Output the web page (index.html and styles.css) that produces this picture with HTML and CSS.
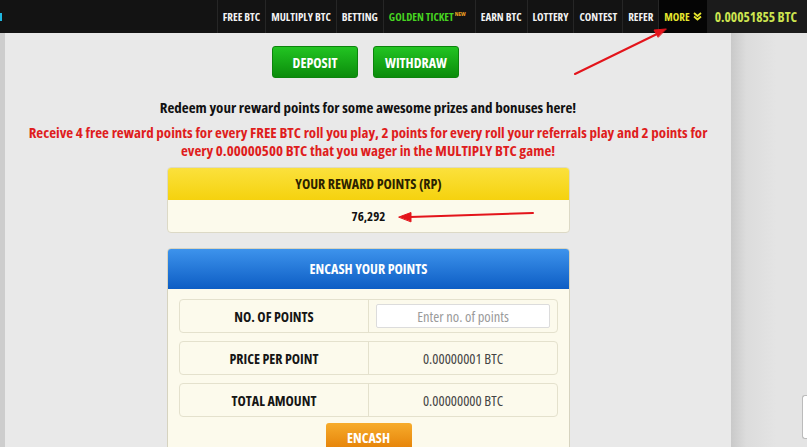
FILE: index.html
```html
<!DOCTYPE html>
<html lang="en">
<head>
  <meta charset="UTF-8">
  <meta name="viewport" content="width=device-width, initial-scale=1">
  <title>Reward Points</title>
  <link rel="stylesheet" href="styles.css">
</head>
<body>
  <header class="topbar">
    <div class="logo-bit"></div>
    <ul class="menu">
      <li>FREE BTC</li>
      <li>MULTIPLY BTC</li>
      <li>BETTING</li>
      <li class="golden">GOLDEN TICKET<sup>NEW</sup></li>
      <li>EARN BTC</li>
      <li>LOTTERY</li>
      <li>CONTEST</li>
      <li>REFER</li>
      <li class="more">MORE
        <svg width="9" height="9" viewBox="0 0 9 9"><path d="M1 1l3.5 3 3.5-3M1 4.5l3.5 3 3.5-3" fill="none" stroke="#e6e62e" stroke-width="1.8"/></svg>
      </li>
    </ul>
    <div class="balance">0.00051855 BTC</div>
  </header>

  <div class="page">
    <div class="side-left"></div>
    <main class="panel">
      <div class="btn-row">
        <button class="btn green">DEPOSIT</button>
        <button class="btn green">WITHDRAW</button>
      </div>

      <p class="lead">Redeem your reward points for some awesome prizes and bonuses here!</p>
      <p class="notice">Receive 4 free reward points for every FREE BTC roll you play, 2 points for every roll your referrals play and 2 points for every 0.00000500 BTC that you wager in the MULTIPLY BTC game!</p>

      <section class="box">
        <div class="box-head yellow">YOUR REWARD POINTS (RP)</div>
        <div class="box-body points">76,292</div>
      </section>

      <section class="box encash">
        <div class="box-head blue">ENCASH YOUR POINTS</div>
        <div class="box-body rows">
          <div class="row">
            <div class="cell label">NO. OF POINTS</div>
            <div class="cell"><input type="text" placeholder="Enter no. of points"></div>
          </div>
          <div class="row">
            <div class="cell label">PRICE PER POINT</div>
            <div class="cell">0.00000001 BTC</div>
          </div>
          <div class="row">
            <div class="cell label">TOTAL AMOUNT</div>
            <div class="cell">0.00000000 BTC</div>
          </div>
          <button class="btn orange">ENCASH</button>
        </div>
      </section>
    </main>
    <div class="side-right">
      <div class="chat-tab"></div>
    </div>
  </div>

  <svg class="marks" width="807" height="447" viewBox="0 0 807 447">
    <g stroke="#e3141b" stroke-width="2" fill="#e3141b" stroke-linecap="round">
      <line x1="575" y1="74" x2="657" y2="34"/>
      <path d="M666 29l-12 1 4 7z" stroke-width="1"/>
      <line x1="533" y1="213" x2="410" y2="217"/>
      <path d="M399 217l12-4.5 0 9z" stroke-width="1"/>
    </g>
  </svg>
</body>
</html>
```

FILE: styles.css
```css
body {
  margin: 0;
  font-family: "Open Sans", "Liberation Sans", sans-serif;
  font-stretch: 75%;
  background: #e9e9e9;
  color: #111;
  height: 447px;
  overflow: hidden;
  position: relative;
}

/* top navigation */
.topbar { display: flex; align-items: stretch; height: 33px; background: #131313; }
.logo-bit { width: 2px; height: 8px; margin-top: 13px; background: #1fb6e0; }
.menu { display: flex; margin: 0 0 0 auto; padding: 0; list-style: none; }
.menu li {
  display: flex; align-items: center; padding: 0 5px;
  border-left: 1px solid #262626;
  color: #f2f2f2; font-size: 11px; font-weight: 700; white-space: nowrap;
}
.menu .golden { color: #46d321; padding-right: 9px; }
.menu sup { color: #f0a020; font-size: 6px; margin-left: 1px; position: relative; top: -3px; }
.menu .more { background: #050505; color: #e6e62e; gap: 3px; }
.balance {
  display: flex; align-items: center; padding: 0 10px 0 8px;
  background: #1b1b1b; color: #cde550; font-size: 13.5px; font-weight: 700;
}

/* page frame */
.page { display: flex; height: 414px; }
.side-left { width: 5px; background: #cdcdcd; }
.panel { width: 726px; padding-top: 13px; text-align: center; }
.side-right {
  flex: 1; display: flex; justify-content: flex-end; align-items: flex-start;
  background: linear-gradient(to right, #c9c9c9, #dcdcdc 20%, #e4e4e4 60%);
}
.chat-tab {
  width: 4px; height: 42px; margin-top: 362px;
  background: #fff; border: 1px solid #bbb; border-right: none; border-radius: 3px 0 0 3px;
}

/* buttons */
.btn-row { display: flex; justify-content: center; gap: 15px; margin-left: -5px; }
.btn {
  font-family: inherit; font-stretch: 75%; font-weight: 700; font-size: 14px;
  color: #fff; border: none; border-radius: 3px; cursor: pointer;
}
.green {
  width: 86px; height: 32px;
  background: linear-gradient(#22c422, #0b8c0b);
  border: 1px solid #0c840c;
}
.orange {
  display: block; margin: 7px auto 0; width: 86px; height: 28px;
  background: linear-gradient(#f7ac2c, #e47f05);
  border-radius: 3px 3px 0 0;
}

/* texts */
.lead { margin: 20px 0 0; font-size: 15px; line-height: 18px; font-weight: 700; }
.notice {
  margin: 7px 10px 0; font-size: 15px; line-height: 18px;
  font-weight: 700; color: #df1d1d;
}

/* boxes */
.box {
  width: 401px; margin: 8px 0 0 162px;
  border: 1px solid #dcd9c6; border-radius: 4px; overflow: hidden;
  background: #fcfaec;
}
.box-head { font-size: 14px; font-weight: 700; }
.yellow { height: 32px; line-height: 32px; background: linear-gradient(#fbe13c, #f5d20e); color: #2b2200; }
.points { height: 32px; line-height: 32px; font-size: 13px; font-weight: 700; }
.encash { margin-top: 15px; border-color: #d6d3c0; height: 210px; }
.blue {
  height: 40px; line-height: 40px; color: #fff;
  background: linear-gradient(#3d93ec, #0d5dc4);
}
.rows { padding: 10px 11px 0; display: flex; flex-direction: column; gap: 8px; }
.row {
  display: flex; height: 32px;
  border: 1px solid #e4e1cd; border-radius: 4px;
}
.cell {
  flex: 1; display: flex; align-items: center; justify-content: center;
  font-size: 14.5px; color: #444;
}
.cell.label { flex: 0 0 188px; border-right: 1px solid #e4e1cd; font-weight: 700; font-size: 14px; color: #151515; }
.cell input {
  width: 174px; height: 24px; box-sizing: border-box;
  border: 1px solid #dcdcdc; border-radius: 2px; background: #fff;
  font-family: inherit; font-stretch: 75%; font-size: 14.5px; text-align: center;
}
.cell input::placeholder { color: #9a9a9a; }
.rows .orange { margin-top: -2px; }

/* annotation arrows */
.marks { position: absolute; left: 0; top: 0; pointer-events: none; }
```
